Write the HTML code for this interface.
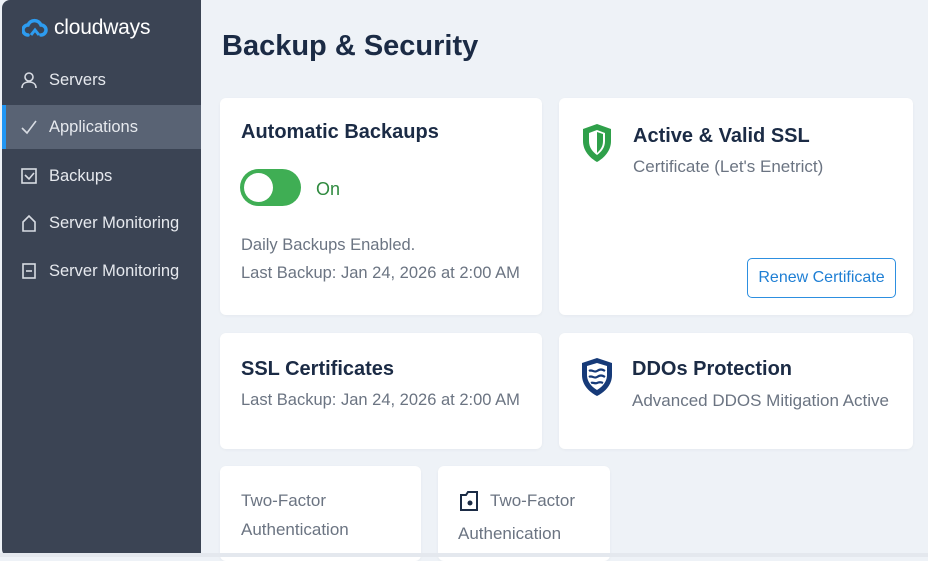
<!DOCTYPE html>
<html><head><meta charset="utf-8"><style>
*{margin:0;padding:0;box-sizing:border-box}
body{width:928px;height:557px;overflow:hidden;background:#eef2f7;font-family:"Liberation Sans",sans-serif;position:relative}
.sb{position:absolute;left:2px;top:0;width:199px;height:557px;background:#3b4454;border-radius:8px 0 0 8px}
.logo{position:absolute;left:20px;top:16px;display:flex;align-items:center;color:#fff;font-size:21px;letter-spacing:-0.2px}
.nav{position:absolute;left:0;width:199px;height:44px;display:flex;align-items:center;color:#e6e9ee;font-size:16.5px}
.nav svg{position:absolute;left:18px}
.nav span{position:absolute;left:47px;top:13px}
.act{background:#596374;border-left:4px solid #2196f3}
.card{position:absolute;background:#fff;border-radius:6px;box-shadow:0 1px 3px rgba(0,0,0,.04)}
h1{position:absolute;left:222px;top:30px;font-size:29px;color:#1b2b45;font-weight:bold}
.t{position:absolute;font-size:20px;font-weight:bold;color:#1b2b45}
.g{position:absolute;font-size:16.5px;color:#6b7482;white-space:nowrap}
</style></head><body>
<div class="sb">
 <div class="logo"><svg width="26" height="22" viewBox="0 0 26 22"><path d="M6 18a5 5 0 0 1 0-10 7 7 0 0 1 13 0 5 5 0 0 1 0 10" fill="none" stroke="#2d9cf0" stroke-width="3.5" stroke-linecap="round"/><path d="M9 18l4-5 4 5" fill="none" stroke="#2d9cf0" stroke-width="3"/></svg><span style="margin-left:6px">cloudways</span></div>
 <div class="nav" style="top:58px"><svg width="18" height="18" viewBox="0 0 18 18" fill="none" stroke="#d8dce3" stroke-width="1.6"><circle cx="9" cy="6" r="4"/><path d="M2 17c0-4 3-6 7-6s7 2 7 6"/></svg><span>Servers</span></div>
 <div class="nav act" style="top:105px;left:0"><svg width="18" height="18" viewBox="0 0 18 18" fill="none" stroke="#d8dce3" stroke-width="1.6" style="left:14px"><path d="M2 10l5 5L16 3"/></svg><span style="left:43px">Applications</span></div>
 <div class="nav" style="top:154px"><svg width="18" height="18" viewBox="0 0 18 18" fill="none" stroke="#d8dce3" stroke-width="1.6"><rect x="2" y="2" width="14" height="14"/><path d="M5 8l4 4 5-6"/></svg><span>Backups</span></div>
 <div class="nav" style="top:201px"><svg width="18" height="18" viewBox="0 0 18 18" fill="none" stroke="#d8dce3" stroke-width="1.6"><path d="M3 17V8l6-6 6 6v9z"/></svg><span>Server Monitoring</span></div>
 <div class="nav" style="top:249px"><svg width="18" height="18" viewBox="0 0 18 18" fill="none" stroke="#d8dce3" stroke-width="1.6"><rect x="3" y="2" width="12" height="14"/><path d="M6 9h6"/></svg><span>Server Monitoring</span></div>
</div>
<h1>Backup &amp; Security</h1>

<div class="card" style="left:220px;top:98px;width:322px;height:217px"></div>
<div class="t" style="left:241px;top:121px">Automatic Backaups</div>
<div style="position:absolute;left:240px;top:169px;width:61px;height:37px;border-radius:19px;background:#3fae54"><div style="position:absolute;left:4px;top:4px;width:29px;height:29px;border-radius:50%;background:#fff"></div></div>
<div class="g" style="left:316px;top:179px;color:#2f8a3f;font-size:18px">On</div>
<div class="g" style="left:241px;top:236px">Daily Backups Enabled.</div>
<div class="g" style="left:241px;top:264px">Last Backup: Jan 24, 2026 at 2:00 AM</div>

<div class="card" style="left:559px;top:98px;width:354px;height:217px"></div>
<svg style="position:absolute;left:580px;top:122px" width="34" height="42" viewBox="0 0 34 42"><path d="M17 2l14 5v12c0 10-7 17-14 21C10 36 3 29 3 19V7z" fill="#2fa04a"/><path d="M17 8l8 3v8c0 7-4 11-8 14C13 30 9 26 9 19v-8z" fill="#fff"/><path d="M17 10l6 2v7c0 6-3 9-6 12z" fill="#2fa04a"/></svg>
<div class="t" style="left:633px;top:125px">Active &amp; Valid SSL</div>
<div class="g" style="left:633px;top:157px;font-size:17px">Certificate (Let's Enetrict)</div>
<div style="position:absolute;left:747px;top:258px;width:149px;height:40px;border:1.5px solid #2d8fe0;border-radius:5px;color:#1f7fd4;font-size:16px;text-align:center;line-height:37px">Renew Certificate</div>

<div class="card" style="left:220px;top:333px;width:322px;height:116px"></div>
<div class="t" style="left:241px;top:358px">SSL Certificates</div>
<div class="g" style="left:241px;top:391px">Last Backup: Jan 24, 2026 at 2:00 AM</div>

<div class="card" style="left:559px;top:333px;width:354px;height:116px"></div>
<svg style="position:absolute;left:579px;top:356px" width="36" height="42" viewBox="0 0 36 42"><path d="M18 2l15 5v12c0 10-7 17-15 21C10 36 3 29 3 19V7z" fill="#163a78"/><path d="M18 7l10 3v9c0 7-5 12-10 15C13 31 8 26 8 19v-9z" fill="#fff"/><path d="M10 15c3-2 5 2 8 0s5-2 8 0M10 21c3-2 5 2 8 0s5-2 8 0M12 27c2-1 4 1 6 0s4-1 6 0" fill="none" stroke="#163a78" stroke-width="2.2"/></svg>
<div class="t" style="left:632px;top:358px">DDOs Protection</div>
<div class="g" style="left:632px;top:391px;font-size:17px">Advanced DDOS Mitigation Active</div>

<div class="card" style="left:220px;top:466px;width:201px;height:95px"></div>
<div class="g" style="left:241px;top:491px;font-size:17px">Two-Factor</div>
<div class="g" style="left:241px;top:520px;font-size:17px">Authentication</div>
<div class="card" style="left:438px;top:466px;width:172px;height:95px"></div>
<svg style="position:absolute;left:459px;top:490px" width="20" height="22" viewBox="0 0 20 22"><path d="M2 5h5l2-3h9v18H2z" fill="none" stroke="#1b2b45" stroke-width="2"/><circle cx="11" cy="13" r="2.5" fill="#1b2b45"/></svg>
<div class="g" style="left:490px;top:491px;font-size:17px">Two-Factor</div>
<div class="g" style="left:458px;top:524px;font-size:17px">Authenication</div>
<div style="position:absolute;left:0;top:553px;width:928px;height:4px;background:#e4e8ee"></div>
</body></html>
